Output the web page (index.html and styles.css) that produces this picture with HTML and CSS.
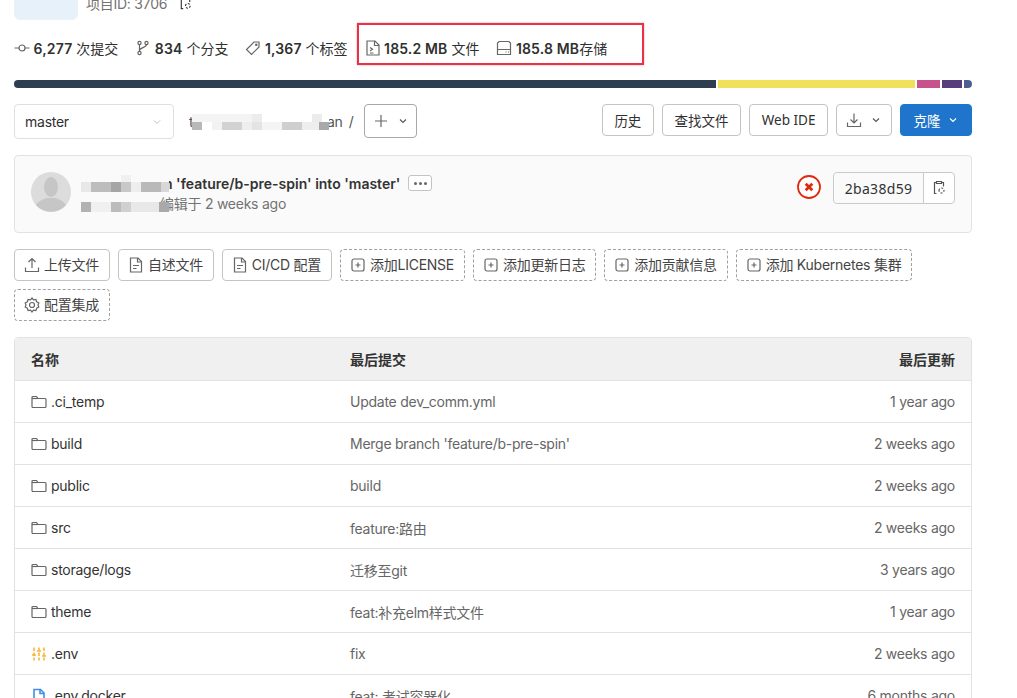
FILE: index.html
```html
<!DOCTYPE html>
<html lang="en">
<head>
    <meta charset="UTF-8">
    <meta name="viewport" content="width=device-width, initial-scale=1.0">
    <title>master</title>
    <link rel="stylesheet" href="styles.css">
</head>
<body>
<div id="page">
    <div class="project-head">
        <div class="project-avatar"></div>
        <div class="project-id">
            <span>项目ID: 3706</span>
            <svg class="icon copy-icon" viewBox="0 0 16 16"><path d="M5.500 2.500h-2v11h2M10.500 2.500h2v4M5.500 1.500h5v2h-5z"/><path d="M8 10.500a2.500 2.500 0 1 1 5 0a2.500 2.500 0 1 1-5 0" stroke-dasharray="2 1.500"/></svg>
        </div>
    </div>

    <div class="stats">
        <span class="stat"><svg class="icon" viewBox="0 0 16 16"><circle cx="8" cy="8" r="3"/><path d="M0.500 8H5M11 8h4.500"/></svg><b>6,277</b> 次提交</span>
        <span class="stat"><svg class="icon" viewBox="0 0 16 16"><circle cx="4.500" cy="3" r="1.600"/><circle cx="4.500" cy="13" r="1.600"/><circle cx="11.500" cy="3" r="1.600"/><path d="M4.500 4.600v6.800M11.500 4.600c0 3.500-7 2.500-7 6"/></svg><b>834</b> 个分支</span>
        <span class="stat"><svg class="icon" viewBox="0 0 16 16"><path d="M9 2h5v5l-7.500 7.500l-5-5z"/><circle cx="11.300" cy="4.700" r="0.700"/></svg><b>1,367</b> 个标签</span>
        <span class="stat stat-size"><svg class="icon" viewBox="0 0 16 16"><path d="M2 1h8l4 4v10H2z"/><path d="M9.500 1v4.500H14M5 7.500l2.500 1.800L5 11M5 13h3.500"/></svg><b>185.2 MB</b> 文件</span>
        <span class="stat stat-size"><svg class="icon" viewBox="0 0 16 16"><path d="M3 1.500h10l1.500 1.500v11.500h-13V3z"/><path d="M1.500 9.500h13M9.500 12h1M12 12h1"/></svg><b>185.8 MB</b>存储</span>
    </div>

    <div class="lang-bar">
        <span class="lang lang-dark"></span>
        <span class="lang lang-yellow"></span>
        <span class="lang lang-pink"></span>
        <span class="lang lang-purple"></span>
        <span class="lang lang-blue"></span>
    </div>

    <div class="tree-bar">
        <div class="branch-select">
            <span>master</span>
            <svg class="icon chevron chevron-light" viewBox="0 0 16 16"><path d="M4 6l4 4l4-4"/></svg>
        </div>
        <div class="path">
            <span class="path-name">t</span>
            <span class="path-end">an</span>
            <span class="path-sep">/</span>
            <span class="mosaic mosaic-path"></span>
        </div>
        <button class="btn btn-add">
            <svg class="icon plus" viewBox="0 0 16 16"><path d="M8 2v12M2 8h12"/></svg>
            <svg class="icon chevron" viewBox="0 0 16 16"><path d="M4 6l4 4l4-4"/></svg>
        </button>
        <div class="tree-actions">
            <button class="btn">历史</button>
            <button class="btn">查找文件</button>
            <button class="btn">Web IDE</button>
            <button class="btn btn-download">
                <svg class="icon" viewBox="0 0 16 16"><path d="M8 1.500v9M4.500 7.500L8 11l3.500-3.500M1.500 10.500v4h13v-4"/></svg>
                <svg class="icon chevron" viewBox="0 0 16 16"><path d="M4 6l4 4l4-4"/></svg>
            </button>
            <button class="btn btn-clone">克隆
                <svg class="icon chevron" viewBox="0 0 16 16"><path d="M4 6l4 4l4-4"/></svg>
            </button>
        </div>
    </div>

    <div class="commit">
        <svg class="commit-avatar" viewBox="0 0 40 40">
            <circle cx="20" cy="20" r="20" fill="#dcdcdc"/>
            <ellipse cx="20" cy="15" rx="7" ry="10" fill="#c6c6c6"/>
            <path d="M5 33c3-5 9-6 11-7h8c2 1 8 2 11 7a20 20 0 0 1-30 0z" fill="#c6c6c6"/>
        </svg>
        <div class="commit-info">
            <div class="commit-title">
                <span class="commit-msg">n 'feature/b-pre-spin' into 'master'</span>
                <span class="ellipsis"><i></i><i></i><i></i></span>
            </div>
            <div class="commit-meta">编辑于 2 weeks ago</div>
            <span class="mosaic mosaic-title"></span>
            <span class="mosaic mosaic-author"></span>
        </div>
        <svg class="ci-failed" viewBox="0 0 24 24">
            <circle cx="12" cy="12" r="11" fill="#fff" stroke="#dd2b0e" stroke-width="1.800"/>
            <path d="M8.700 8.700l6.600 6.600M15.300 8.700l-6.600 6.600" stroke="#dd2b0e" stroke-width="2.800" fill="none"/>
        </svg>
        <div class="sha-group">
            <span class="sha">2ba38d59</span>
            <span class="sha-copy">
                <svg class="icon copy-icon" viewBox="0 0 16 16"><path d="M5.500 2.500h-2v11h2M10.500 2.500h2v4M5.500 1.500h5v2h-5z"/><path d="M8 10.500a2.500 2.500 0 1 1 5 0a2.500 2.500 0 1 1-5 0" stroke-dasharray="2 1.500"/></svg>
            </span>
        </div>
    </div>

    <div class="quick-actions">
        <button class="btn btn-action"><svg class="icon" viewBox="0 0 16 16"><path d="M8 11V1.500M4.500 5L8 1.500L11.500 5M1.500 10.500v4h13v-4"/></svg>上传文件</button>
        <button class="btn btn-action"><svg class="icon" viewBox="0 0 16 16"><path d="M2.500 1h7.500l3.500 3.500V15h-11z"/><path d="M9.500 1v4h4M5 8.500h6M5 11.500h3.500"/></svg>自述文件</button>
        <button class="btn btn-action"><svg class="icon" viewBox="0 0 16 16"><path d="M2.500 1h7.500l3.500 3.500V15h-11z"/><path d="M9.500 1v4h4M5 8.500h6M5 11.500h3.500"/></svg>CI/CD 配置</button>
        <button class="btn btn-action btn-dashed"><svg class="icon" viewBox="0 0 16 16"><rect x="2" y="2" width="12" height="12" rx="2"/><path d="M8 5.500v5M5.500 8h5"/></svg>添加LICENSE</button>
        <button class="btn btn-action btn-dashed"><svg class="icon" viewBox="0 0 16 16"><rect x="2" y="2" width="12" height="12" rx="2"/><path d="M8 5.500v5M5.500 8h5"/></svg>添加更新日志</button>
        <button class="btn btn-action btn-dashed"><svg class="icon" viewBox="0 0 16 16"><rect x="2" y="2" width="12" height="12" rx="2"/><path d="M8 5.500v5M5.500 8h5"/></svg>添加贡献信息</button>
        <button class="btn btn-action btn-dashed"><svg class="icon" viewBox="0 0 16 16"><rect x="2" y="2" width="12" height="12" rx="2"/><path d="M8 5.500v5M5.500 8h5"/></svg>添加 Kubernetes 集群</button>
        <button class="btn btn-action btn-dashed"><svg class="icon" viewBox="0 0 16 16"><path d="M8 1l1.500 1.800l2.400-0.300l0.800 2.300l2.100 1.200l-0.800 2l0.800 2l-2.100 1.200l-0.800 2.300l-2.400-0.300L8 15l-1.500-1.800l-2.400 0.300l-0.800-2.300l-2.100-1.200l0.800-2l-0.800-2l2.100-1.200l0.800-2.300l2.400 0.300z"/><circle cx="8" cy="8" r="2.500"/></svg>配置集成</button>
    </div>

    <div class="file-table">
        <div class="file-row file-head">
            <span>名称</span>
            <span>最后提交</span>
            <span class="file-time">最后更新</span>
        </div>
        <div class="file-row">
            <span class="file-name"><svg class="icon" viewBox="0 0 16 16"><path d="M1 3.500a1 1 0 0 1 1-1h3.500l1.500 2h7a1 1 0 0 1 1 1v7a1 1 0 0 1-1 1H2a1 1 0 0 1-1-1z"/><path d="M7 4.500H1"/></svg>.ci_temp</span>
            <span class="file-commit">Update dev_comm.yml</span>
            <span class="file-time">1 year ago</span>
        </div>
        <div class="file-row">
            <span class="file-name"><svg class="icon" viewBox="0 0 16 16"><path d="M1 3.500a1 1 0 0 1 1-1h3.500l1.500 2h7a1 1 0 0 1 1 1v7a1 1 0 0 1-1 1H2a1 1 0 0 1-1-1z"/><path d="M7 4.500H1"/></svg>build</span>
            <span class="file-commit">Merge branch 'feature/b-pre-spin'</span>
            <span class="file-time">2 weeks ago</span>
        </div>
        <div class="file-row">
            <span class="file-name"><svg class="icon" viewBox="0 0 16 16"><path d="M1 3.500a1 1 0 0 1 1-1h3.500l1.500 2h7a1 1 0 0 1 1 1v7a1 1 0 0 1-1 1H2a1 1 0 0 1-1-1z"/><path d="M7 4.500H1"/></svg>public</span>
            <span class="file-commit">build</span>
            <span class="file-time">2 weeks ago</span>
        </div>
        <div class="file-row">
            <span class="file-name"><svg class="icon" viewBox="0 0 16 16"><path d="M1 3.500a1 1 0 0 1 1-1h3.500l1.500 2h7a1 1 0 0 1 1 1v7a1 1 0 0 1-1 1H2a1 1 0 0 1-1-1z"/><path d="M7 4.500H1"/></svg>src</span>
            <span class="file-commit">feature:路由</span>
            <span class="file-time">2 weeks ago</span>
        </div>
        <div class="file-row">
            <span class="file-name"><svg class="icon" viewBox="0 0 16 16"><path d="M1 3.500a1 1 0 0 1 1-1h3.500l1.500 2h7a1 1 0 0 1 1 1v7a1 1 0 0 1-1 1H2a1 1 0 0 1-1-1z"/><path d="M7 4.500H1"/></svg>storage/logs</span>
            <span class="file-commit">迁移至git</span>
            <span class="file-time">3 years ago</span>
        </div>
        <div class="file-row">
            <span class="file-name"><svg class="icon" viewBox="0 0 16 16"><path d="M1 3.500a1 1 0 0 1 1-1h3.500l1.500 2h7a1 1 0 0 1 1 1v7a1 1 0 0 1-1 1H2a1 1 0 0 1-1-1z"/><path d="M7 4.500H1"/></svg>theme</span>
            <span class="file-commit">feat:补充elm样式文件</span>
            <span class="file-time">1 year ago</span>
        </div>
        <div class="file-row">
            <span class="file-name"><svg class="icon icon-env" viewBox="0 0 16 16"><path d="M3 1.500v13M8 1.500v13M13 1.500v13" stroke-dasharray="3.500 1.500"/><path d="M1 9h4M6 5h4M11 10h4"/></svg>.env</span>
            <span class="file-commit">fix</span>
            <span class="file-time">2 weeks ago</span>
        </div>
        <div class="file-row">
            <span class="file-name"><svg class="icon icon-doc" viewBox="0 0 16 16"><path d="M3 1.500h6.500l3.500 3.500v9.500H3z"/><path d="M9 1.500v4h4"/></svg>.env.docker</span>
            <span class="file-commit">feat: 考试容器化</span>
            <span class="file-time">6 months ago</span>
        </div>
    </div>

    <div class="highlight-box"></div>
</div>
</body>
</html>
```

FILE: styles.css
```css
html, body {
    margin: 0;
    padding: 0;
    background-color: #fff;
}
button {
    font: inherit;
    color: inherit;
    letter-spacing: inherit;
}
#page {
    position: relative;
    overflow: hidden;
    width: 958px;
    height: 698px;
    padding-left: 14px;
    padding-right: 45px;
    font-family: Inter, "Noto Sans CJK SC", sans-serif;
    font-size: 14px;
    letter-spacing: -0.250px;
    color: #303030;
}
.icon {
    flex: none;
    width: 16px;
    height: 16px;
    fill: none;
    stroke: #666;
    stroke-width: 1.200;
}

/* top of the project header, scrolled mostly away */
.project-head {
    display: flex;
    align-items: flex-end;
    gap: 8px;
    height: 20px;
}
.project-avatar {
    width: 64px;
    height: 40px;
    flex: none;
    background-color: #e7f1fa;
    border: 1px solid #eef2f6;
    border-radius: 6px;
    box-sizing: border-box;
}
.project-id {
    display: flex;
    align-items: center;
    gap: 11px;
    height: 16px;
    margin-bottom: 9px;
    color: #737373;
}
.project-id .copy-icon {
    stroke: #333;
    width: 15px;
    height: 15px;
}

.stats {
    display: flex;
    align-items: center;
    height: 24px;
    margin-top: 16px;
    gap: 17px;
}
.stat {
    display: flex;
    align-items: center;
    white-space: pre-wrap;
    letter-spacing: 0;
    color: #303030;
}
.stat .icon {
    margin-right: 3.500px;
}
.stat b {
    font-weight: 600;
    letter-spacing: 0.150px;
}

.lang-bar {
    display: flex;
    gap: 2px;
    height: 8px;
    margin-top: 20px;
    border-radius: 4px;
    overflow: hidden;
}
.lang {
    display: block;
}
.lang-dark { width: 702px; background-color: #2c3e50; }
.lang-yellow { width: 197px; background-color: #f1e05a; }
.lang-pink { width: 23px; background-color: #c6538c; }
.lang-purple { width: 20px; background-color: #563d7c; }
.lang-blue { width: 8px; background-color: #4f5d95; }

.tree-bar {
    display: flex;
    align-items: flex-start;
    margin-top: 16px;
}
.branch-select {
    display: flex;
    align-items: center;
    justify-content: space-between;
    box-sizing: border-box;
    width: 160px;
    height: 35px;
    padding: 0 10px;
    border: 1px solid #dfdfdf;
    border-radius: 4px;
}
.chevron {
    width: 12px;
    height: 12px;
    stroke: #555;
    stroke-width: 1.500;
}
.chevron-light {
    stroke: #b5b5b5;
    stroke-width: 1.200;
}
.path {
    position: relative;
    display: flex;
    align-items: center;
    width: 175px;
    height: 34px;
    margin-left: 15px;
    color: #555;
}
.path-name {
    width: 138px;
}
.path-sep {
    margin-left: 6px;
}
.mosaic {
    position: absolute;
    display: block;
}
.mosaic-path {
    left: 3px;
    top: 10px;
    width: 137px;
    height: 16px;
    background-image:
        linear-gradient(90deg, #f4f4f4 0 60px, #ececec 60px 70px, #fff 70px 120px, #ececec 120px 130px, #fff 130px 137px),
        linear-gradient(90deg, #b8b8b8 0 10px, #fff 10px 20px, #f2f2f2 20px 30px, #d2d2d2 30px 50px, #eeeeee 50px 60px, #e4e4e4 60px 70px, #f4f4f4 70px 90px, #cfcfcf 90px 110px, #eeeeee 110px 127px, #a9a9a9 127px 137px);
    background-size: 100% 8px, 100% 8px;
    background-position: 0 0, 0 100%;
    background-repeat: no-repeat;
}
.tree-actions {
    display: flex;
    gap: 8px;
    margin-left: auto;
}
.btn {
    display: inline-flex;
    align-items: center;
    justify-content: center;
    box-sizing: border-box;
    height: 32px;
    padding: 0 11.600px;
    background-color: #fff;
    border: 1px solid #c4c4c4;
    border-radius: 4px;
    font-family: "Noto Sans", "Noto Sans CJK SC", sans-serif;
    font-size: 13.500px;
    letter-spacing: 0;
    white-space: nowrap;
}
.btn-add {
    gap: 8px;
    width: 53px;
    height: 34px;
    padding: 0;
    border-color: #a8a8a8;
}
.btn-download {
    gap: 8px;
    width: 56px;
    padding: 0;
}
.btn-clone {
    gap: 6px;
    width: 72px;
    padding: 0;
    color: #fff;
    background-color: #1f75cb;
    border-color: #1f75cb;
}
.btn-clone .icon {
    stroke: #fff;
}

.commit {
    display: flex;
    align-items: flex-start;
    box-sizing: border-box;
    height: 78px;
    margin-top: 16px;
    padding: 16px;
    background-color: #fafafa;
    border: 1px solid #e2e2e2;
    border-radius: 4px;
}
.commit-avatar {
    flex: none;
    width: 40px;
    height: 40px;
}
.commit-info {
    position: relative;
    flex: 1;
    margin-left: 10px;
}
.commit-title {
    display: flex;
    align-items: center;
    height: 20px;
    margin-top: 1px;
    margin-left: 83px;
    font-weight: 600;
    letter-spacing: 0;
    color: #333;
}
.commit-msg {
    white-space: pre;
}
.ellipsis {
    display: inline-flex;
    align-items: center;
    justify-content: center;
    gap: 2px;
    box-sizing: border-box;
    width: 24px;
    height: 16px;
    margin-left: 8px;
    background-color: #fff;
    border: 1px solid #c4c4c4;
    border-radius: 3px;
}
.ellipsis i {
    width: 3px;
    height: 3px;
    border-radius: 50%;
    background-color: #666;
}
.commit-meta {
    margin-top: 1px;
    margin-left: 79px;
    height: 20px;
    line-height: 20px;
    color: #737373;
}
.mosaic-title {
    left: 0;
    top: 3px;
    width: 88px;
    height: 17px;
    background-image:
        linear-gradient(90deg, #fafafa 0 40px, #f0f0f0 40px 50px, #fafafa 50px 88px),
        linear-gradient(90deg, #e8e8e8 0 10px, #bdbdbd 10px 30px, #a5a5a5 30px 40px, #c8c8c8 40px 50px, #eeeeee 50px 60px, #b9b9b9 60px 80px, #d8d8d8 80px 88px);
    background-size: 100% 7px, 100% 10px;
    background-position: 0 0, 0 100%;
    background-repeat: no-repeat;
}
.mosaic-author {
    left: 0;
    top: 30px;
    width: 88px;
    height: 10px;
    background-image:
        linear-gradient(90deg, #b2b2b2 0 10px, #f0f0f0 10px 30px, #bcbcbc 30px 40px, #d0d0d0 40px 50px, #e8e8e8 50px 78px, #a9a9a9 78px 88px);
}
.ci-failed {
    flex: none;
    width: 24px;
    height: 24px;
    margin-top: 3px;
}
.sha-group {
    display: flex;
    box-sizing: border-box;
    height: 32px;
    margin-left: 12px;
    border: 1px solid #c9c9c9;
    border-radius: 4px;
    background-color: #fff;
}
.sha {
    display: flex;
    align-items: center;
    width: 90px;
    box-sizing: border-box;
    justify-content: center;
    border-right: 1px solid #c9c9c9;
    background-color: #fafafa;
    border-radius: 4px 0 0 4px;
    font-family: "Noto Sans", sans-serif;
    letter-spacing: 0.300px;
    color: #333;
}
.sha-copy {
    display: flex;
    align-items: center;
    justify-content: center;
    width: 30px;
}
.sha-copy .icon {
    stroke: #555;
}

.quick-actions {
    display: flex;
    flex-wrap: wrap;
    gap: 8px;
    margin-top: 16px;
}
.btn-action {
    gap: 4px;
    padding: 0 9.900px 2px 9px;
    font-family: Inter, "Noto Sans CJK SC", sans-serif;
    font-size: 14px;
    letter-spacing: -0.250px;
    color: #444;
}
.btn-action .icon {
    margin-top: 2px;
}
.btn-dashed {
    border-style: dashed;
    border-color: #a0a0a0;
}

.file-table {
    margin-top: 16px;
    border: 1px solid #e2e2e2;
    border-radius: 4px 4px 0 0;
}
.file-row {
    display: grid;
    grid-template-columns: 319px 1fr 200px;
    align-items: center;
    box-sizing: border-box;
    height: 42px;
    padding: 0 16px;
    border-bottom: 1px solid #e2e2e2;
}
.file-head {
    height: 43px;
    font-weight: 600;
    letter-spacing: 0;
    background-color: #f0f0f0;
    color: #333;
}
.file-name {
    display: flex;
    align-items: center;
    gap: 4px;
    color: #333;
}
.file-commit {
    color: #666;
}
.file-time {
    text-align: right;
    color: #666;
}
.file-head .file-time {
    color: #333;
}
.icon-env {
    stroke: #fcb53a;
    stroke-width: 1.600;
}
.icon-doc {
    stroke: #428fdc;
    stroke-width: 1.600;
}

/* annotation drawn on the screenshot */
.highlight-box {
    position: absolute;
    left: 357px;
    top: 23px;
    width: 283px;
    height: 38px;
    border: 2px solid #ee2f45;
    box-shadow: 0 0 2px rgba(0, 0, 0, 0.3);
}
```
